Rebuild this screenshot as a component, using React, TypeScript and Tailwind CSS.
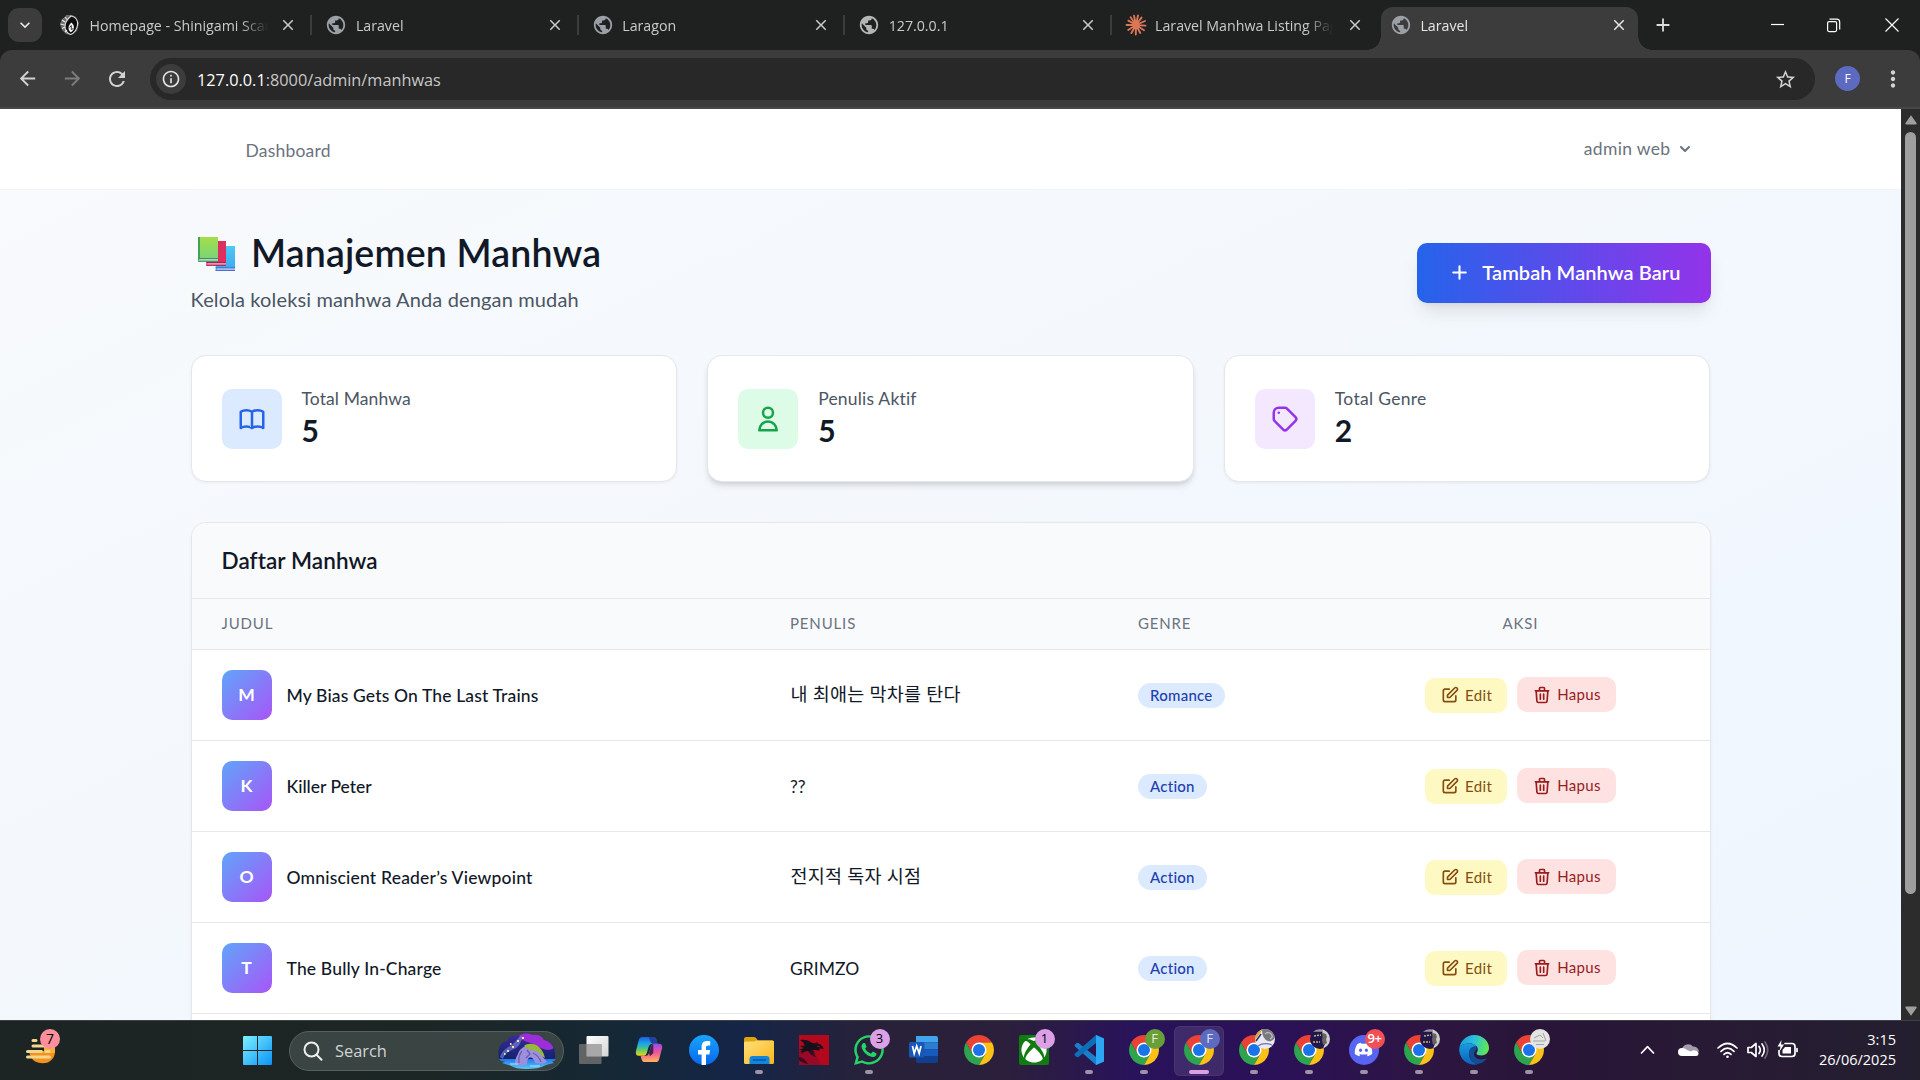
import type { ReactNode } from "react";
import { MdPublic, MdClose, MdAdd, MdArrowBack, MdArrowForward, MdRefresh, MdStarBorder, MdInfoOutline, MdMoreVert, MdKeyboardArrowDown } from "react-icons/md";
import { FaWhatsapp, FaXbox, FaDiscord } from "react-icons/fa";

/* ---------- browser chrome ---------- */

function Globe({ tone = "text-[#9aa0a6]" }: { tone?: string }) {
  return <MdPublic className={`size-[22px] shrink-0 ${tone}`} />;
}

function Burst() {
  return (
    <svg viewBox="0 0 22 22" className="size-[22px] shrink-0" stroke="#d97757" strokeWidth="1.9" strokeLinecap="round">
      <path d="M11 11 9 1.8M11 11 13 1.5M11 11 16.5 3.6M11 11 20 7M11 11 20.5 11.6M11 11 19 16.3M11 11 15.3 19M11 11 10.8 20.6M11 11 6.4 19M11 11 3.2 16M11 11 1.5 11M11 11 3.4 6.6M11 11 5.6 3.3" />
    </svg>
  );
}

function MaskIcon() {
  return (
    <svg viewBox="0 0 22 22" className="size-[22px] shrink-0">
      <path d="M1 10 3 5 6 3 7 1l6 0 4 2 3 6-2 8-6 4-5-1-4-4Z" fill="#6d6d6d" />
      <path d="M12 2c5 1 7 5 6.500 9S15 20 11.500 20.500C8 19 6 16 6 12.500S8.500 5 12 2Z" fill="#0c0c0c" stroke="#dcdcdc" strokeWidth="1.100" />
      <path d="M3 6l3 2M1.500 10l4 1M3 14.500l3-1.500M6 3l2 2.500M6 18l2-2" stroke="#e8e8e8" strokeWidth="1.200" />
      <path d="M12.300 8.500c2 1.500 2.900 3.600 2.600 5.500s-1.500 3.700-3 4.200c-1.600-1-2.500-2.600-2.400-4.500s1.300-3.700 2.800-5.200Z" fill="#f4f4f4" />
      <path d="m10.500 13.500 1.800-2v4l2-1" stroke="#222" strokeWidth=".9" fill="none" />
    </svg>
  );
}

type Tab = { title: string; icon: ReactNode };
const tabs: Tab[] = [
  { title: "Homepage - Shinigami Scans", icon: <MaskIcon /> },
  { title: "Laravel", icon: <Globe /> },
  { title: "Laragon", icon: <Globe /> },
  { title: "127.0.0.1", icon: <Globe tone="text-[#b5b5b5]" /> },
  { title: "Laravel Manhwa Listing Page", icon: <Burst /> },
];

function TabTitle({ children }: { children: ReactNode }) {
  return (
    <span className="ml-[8.5px] w-[180.5px] overflow-hidden pt-[1px] whitespace-nowrap text-[14.2px] [mask-image:linear-gradient(to_right,#000_150px,transparent_178px)]">
      {children}
    </span>
  );
}

function TabStrip() {
  return (
    <div className="flex h-[50px] shrink-0 items-center bg-[#1f2120] text-[#c9cbca]">
      <button className="ml-[8px] flex size-[34px] items-center justify-center rounded-[11px] bg-[#3c3c3c]">
        <MdKeyboardArrowDown className="size-[20px] text-[#e6e6e6]" />
      </button>
      <div className="ml-[4px] flex items-center">
        {tabs.map((t, i) => (
          <div key={t.title} className="flex w-[266.400px] items-center pl-[13px]">
            {t.icon}
            <TabTitle>{t.title}</TabTitle>
            <MdClose className="ml-[10px] size-[18px] shrink-0" />
            {i < tabs.length - 1 && <span className="ml-[13px] h-[20px] w-[2px] shrink-0 bg-[#3c3c3c]" />}
          </div>
        ))}
      </div>
      <div className="relative ml-[3px] mt-[7px] flex h-[43px] w-[257px] shrink-0 items-center rounded-t-[12px] bg-[#3c3c3c] pb-[7px] pl-[9px] text-[#e6e6e6]">
        <span className="absolute bottom-0 -left-[14px] size-[14px] bg-[radial-gradient(circle_at_0_0,transparent_13.5px,#3c3c3c_14px)]" />
        <span className="absolute bottom-0 -right-[14px] size-[14px] bg-[radial-gradient(circle_at_100%_0,transparent_13.5px,#3c3c3c_14px)]" />
        <Globe />
        <TabTitle>Laravel</TabTitle>
        <MdClose className="ml-[9px] size-[18px] shrink-0" />
      </div>
      <MdAdd className="ml-[14.5px] size-[22px] shrink-0 text-[#dcdcdc]" />
      <svg viewBox="0 0 130 16" className="mr-[20.5px] ml-auto h-[16px] w-[130px] shrink-0" fill="none" stroke="#fff" strokeWidth="1.2">
        <path d="M1 7.5h13" />
        <rect x="57.6" y="4.6" width="9" height="10" rx="1.5" />
        <path d="M59.5 2.2h7.2a3 3 0 0 1 3 3v7.3" />
        <path d="m115.500 1.500 13 13m0-13-13 13" />
      </svg>
    </div>
  );
}

function Toolbar() {
  return (
    <div className="shrink-0 bg-[#1f2120]">
      <div className="flex h-[59px] items-center rounded-t-[12px] border-b-2 border-[#484848] bg-[#3c3c3c] text-[#d2d2d2]">
        <MdArrowBack className="ml-[16px] size-[23px]" />
        <MdArrowForward className="ml-[22px] size-[23px] text-[#7c7c7c]" />
        <MdRefresh className="ml-[21px] size-[24px]" />
        <div className="mt-[1px] ml-[21px] flex h-[42px] w-[1665px] items-center rounded-full bg-[#282828]">
          <span className="ml-[6px] flex size-[30px] items-center justify-center rounded-full bg-[#3c3c3c]">
            <MdInfoOutline className="size-[20px] text-[#e3e3e3]" />
          </span>
          <span className="ml-[11px] pt-[2px] text-[16.3px] text-[#c7c7c7]">
            <span className="text-white">127.0.0.1</span>:8000/admin/manhwas
          </span>
          <MdStarBorder className="mr-[18px] ml-auto size-[23px]" />
        </div>
        <span className="ml-[20px] flex size-[25px] items-center justify-center rounded-full bg-[#5c6bc0] text-[12px] text-white">F</span>
        <MdMoreVert className="ml-[20px] size-[26px]" />
      </div>
    </div>
  );
}

/* ---------- page ---------- */

const paths = {
  book: "M12 6.253v13m0-13C10.832 5.477 9.246 5 7.5 5S4.168 5.477 3 6.253v13C4.168 18.477 5.754 18 7.5 18s3.332.477 4.5 1.253m0-13C13.168 5.477 14.754 5 16.5 5c1.747 0 3.332.477 4.5 1.253v13C19.832 18.477 18.247 18 16.5 18c-1.746 0-3.332.477-4.5 1.253",
  user: "M16 7a4 4 0 11-8 0 4 4 0 018 0zM12 14a7 7 0 00-7 7h14a7 7 0 00-7-7z",
  tag: "M7 7h.01M7 3h5c.512 0 1.024.195 1.414.586l7 7a2 2 0 010 2.828l-7 7a2 2 0 01-2.828 0l-7-7A1.994 1.994 0 013 12V7a4 4 0 014-4z",
  plus: "M12 6v6m0 0v6m0-6h6m-6 0H6",
  edit: "M11 5H6a2 2 0 00-2 2v11a2 2 0 002 2h11a2 2 0 002-2v-5m-1.414-9.414a2 2 0 112.828 2.828L11.828 15H9v-2.828l8.586-8.586z",
  trash: "M19 7l-.867 12.142A2 2 0 0116.138 21H7.862a2 2 0 01-1.995-1.858L5 7m5 4v6m4-6v6m1-10V4a1 1 0 00-1-1h-4a1 1 0 00-1 1v3M4 7h16",
};

function Outline({ name, className }: { name: keyof typeof paths; className: string }) {
  return (
    <svg viewBox="0 0 24 24" fill="none" stroke="currentColor" strokeWidth="2" strokeLinecap="round" strokeLinejoin="round" className={`shrink-0 ${className}`}>
      <path d={paths[name]} />
    </svg>
  );
}

function Books() {
  return (
    <svg viewBox="0 0 111 102" className="h-[34px] w-[37px]">
      <defs>
        <linearGradient id="bkGreen" x1="0" y1="0" x2="0" y2="1"><stop stopColor="#a5dd49" /><stop offset="1" stopColor="#72d47e" /></linearGradient>
        <linearGradient id="bkBlue" x1="0" y1="0" x2="0" y2="1"><stop stopColor="#4dc8f3" /><stop offset="1" stopColor="#3ba7f2" /></linearGradient>
      </defs>
      <path d="M53 27h58v75H53z" fill="url(#bkBlue)" />
      <path d="M56 94h55v5H56z" fill="#d3d3ee" /><path d="M53 98h58v4H53zM53 91h58v3H53z" fill="#4a6fd0" />
      <path d="M25 12h59v74H25z" fill="#de2d60" />
      <path d="M28 79h56v4H28z" fill="#dccfe4" /><path d="M25 83h59v3H25zM25 75h59v3H25z" fill="#a8234f" />
      <path d="M0 0h60v74H0z" fill="url(#bkGreen)" />
      <path d="M0 0h6v70H0z" fill="#43a155" />
      <path d="M3 67h57v4H3z" fill="#d8d3e2" /><path d="M0 71h60v3H0zM3 63h57v3H3z" fill="#3f8f5c" />
    </svg>
  );
}

const stats = [
  { label: "Total Manhwa", value: "5", icon: "book", tile: "bg-[#dbeafe] text-[#2563eb]", shadow: "shadow-[0_1px_3px_rgba(0,0,0,0.06)]", fit: "tracking-[0.1px]" },
  { label: "Penulis Aktif", value: "5", icon: "user", tile: "bg-[#dcfce7] text-[#16a34a]", shadow: "shadow-[0_5px_7px_-1px_rgba(0,0,0,0.1),0_3px_5px_-2px_rgba(0,0,0,0.1)]", fit: "tracking-[0.2px]" },
  { label: "Total Genre", value: "2", icon: "tag", tile: "bg-[#f3e8ff] text-[#9333ea]", shadow: "shadow-[0_1px_3px_rgba(0,0,0,0.06)]", fit: "tracking-[0.3px]" },
] as const;

const rows = [
  { title: "My Bias Gets On The Last Trains", author: "내 최애는 막차를 탄다", korean: true, genre: "Romance", fit: "tracking-[0.14px]" },
  { title: "Killer Peter", author: "??", korean: false, genre: "Action", fit: "tracking-[-0.02px]" },
  { title: "Omniscient Reader’s Viewpoint", author: "전지적 독자 시점", korean: true, genre: "Action", fit: "tracking-[0.2px]" },
  { title: "The Bully In-Charge", author: "GRIMZO", korean: false, genre: "Action", fit: "tracking-[0.16px]" },
];

const cols = "grid grid-cols-[568px_348px_224px_1fr]";

function Page() {
  return (
    <main className="min-w-0 flex-1 overflow-hidden bg-linear-to-br/srgb from-[#f8fafc] to-[#eff6ff] font-['Lato','Noto_Sans_CJK_KR',sans-serif] [--spacing:5px]">
      <nav className="h-[81px] border-b border-[#f1f3f5] bg-white">
        <div className="mx-auto flex h-16 w-[1520px] items-center justify-between pr-[16px] pl-[55px] text-[17.5px] text-[#6b7280]">
          <span className="pt-[5px] tracking-[0.2px]">Dashboard</span>
          <span className="flex items-center gap-[4px] tracking-[0.35px]">
            admin web
            <svg viewBox="0 0 20 20" className="size-[20px]" fill="currentColor">
              <path fillRule="evenodd" clipRule="evenodd" d="M5.293 7.293a1 1 0 011.414 0L10 10.586l3.293-3.293a1 1 0 111.414 1.414l-4 4a1 1 0 01-1.414 0l-4-4a1 1 0 010-1.414z" />
            </svg>
          </span>
        </div>
      </nav>

      <div className="mx-auto flex w-[1520px] flex-col gap-8 py-8 text-[#111827]">
        <header className="flex items-center justify-between">
          <div>
            <h1 className="mb-2 flex h-9 items-center text-[37.5px] font-semibold tracking-[0.15px]">
              <span className="mr-[16.5px] ml-[7px] flex pt-[2px]"><Books /></span>
              <span className="pt-[2px]">Manajemen Manhwa</span>
            </h1>
            <p className="-mt-px mb-px text-[20px] leading-[30px] tracking-[0.14px] text-[#4b5563]">Kelola koleksi manhwa Anda dengan mudah</p>
          </div>
          <button className="flex h-12 items-center gap-2 rounded-[10px] bg-linear-to-r/srgb from-[#2563eb] to-[#9333ea] px-6 pb-px text-[20px] font-semibold tracking-[0.06px] whitespace-nowrap text-white shadow-[0_12px_19px_-4px_rgba(0,0,0,0.1),0_5px_7px_-5px_rgba(0,0,0,0.1)]">
            <Outline name="plus" className="size-5" />
            Tambah Manhwa Baru
          </button>
        </header>

        <section className="grid grid-cols-3 gap-6">
          {stats.map((s) => (
            <div key={s.label} className={`flex h-[127px] items-center gap-4 rounded-[15px] border border-[#e5e7eb] bg-white px-6 ${s.shadow}`}>
              <span className={`flex size-12 items-center justify-center rounded-[10px] ${s.tile}`}>
                <Outline name={s.icon} className="size-6" />
              </span>
              <div>
                <p className={`text-[17.5px] leading-[25px] text-[#4b5563] ${s.fit}`}>{s.label}</p>
                <p className="-mt-px mb-px text-[30px] leading-[40px] font-bold">{s.value}</p>
              </div>
            </div>
          ))}
        </section>

        <section className="overflow-hidden rounded-[15px] border border-[#e5e7eb] bg-white shadow-[0_1px_3px_rgba(0,0,0,0.06)]">
          <h2 className="border-b border-[#e5e7eb] bg-[#f9fafb] px-6 py-4 text-[22.5px] leading-[35px] font-semibold tracking-[0.08px]">Daftar Manhwa</h2>
          <div className={`${cols} border-b border-[#e5e7eb] bg-[#f9fafb] pt-[14px] pb-[16px] text-[15px] leading-[20px] tracking-[0.85px] text-[#6b7280]`}>
            <span className="px-6">JUDUL</span>
            <span className="px-[30.5px]">PENULIS</span>
            <span className="px-[30.5px]">GENRE</span>
            <span className="text-center">AKSI</span>
          </div>
          {rows.map((r) => (
            <div key={r.title} className={`${cols} h-[91px] items-center border-b border-[#e5e7eb]`}>
              <div className="flex items-center gap-[15px] px-6">
                <span className="flex size-10 items-center justify-center rounded-[10px] bg-linear-to-br/srgb from-[#60a5fa] to-[#a855f7] text-[17.5px] font-bold text-white">{r.title[0]}</span>
                <span className={`pt-[2px] text-[17.5px] font-medium ${r.fit}`}>{r.title}</span>
              </div>
              <span className={r.korean ? "px-[31px] text-[18.5px] tracking-[0.25px]" : "px-[30.5px] pt-[2px] text-[17.5px]"}>{r.author}</span>
              <span className="px-6">
                <span className="inline-flex h-[25px] items-center rounded-full bg-[#dbeafe] px-[12.5px] pb-px align-middle text-[15px] font-medium tracking-[0.25px] text-[#1e40af]">{r.genre}</span>
              </span>
              <div className="flex items-start justify-center gap-2 text-[15px] tracking-[0.35px]">
                <button className="mt-px flex h-7 items-center gap-1 rounded-[10px] bg-[#fef9c3] px-3 pb-px text-[#854d0e]">
                  <Outline name="edit" className="size-4" />
                  Edit
                </button>
                <button className="flex h-7 items-center gap-1 rounded-[10px] bg-[#fee2e2] px-3 text-[#991b1b]">
                  <Outline name="trash" className="size-4" />
                  Hapus
                </button>
              </div>
            </div>
          ))}
          <div className="h-[91px]" />
        </section>
      </div>
    </main>
  );
}

function Scrollbar() {
  return (
    <div className="flex w-[19px] shrink-0 flex-col items-center bg-[#2c2c2c]">
      <svg viewBox="0 0 12 10" className="mt-[6px] h-[10px] w-[12px]" fill="#9f9f9f"><path d="M6 0.300 11.500 8q.6 1.600-.8 1.600H1.300Q-.1 9.600.5 8Z" /></svg>
      <span className="mt-[7px] h-[762px] w-[11px] rounded-full bg-[#9f9f9f]" />
      <svg viewBox="0 0 12 10" className="mt-auto mb-[4px] h-[10px] w-[12px]" fill="#9f9f9f"><path d="M6 9.700 11.500 2q.6-1.600-.8-1.600H1.300Q-.1.400.5 2Z" /></svg>
    </div>
  );
}

/* ---------- taskbar ---------- */

function Chrome() {
  return (
    <svg viewBox="0 0 48 48" className="size-[30px]">
      <path d="M24 12H44.780A24 24 0 0 0 3.220 12L13.600 30 24 24Z" fill="#ea4335" />
      <path d="M3.220 12A24 24 0 0 0 24 48L34.390 30 24 24 13.610 30Z" fill="#2da44e" />
      <path d="M24 48A24 24 0 0 0 44.780 12H24V24L34.390 30Z" fill="#fbc116" />
      <circle cx="24" cy="24" r="12" fill="#fff" />
      <circle cx="24" cy="24" r="9.600" fill="#1a73e8" />
    </svg>
  );
}

function Windows() {
  return (
    <svg viewBox="0 0 29 29" className="size-[29px]">
      <defs><linearGradient id="win" x1="0" y1="0" x2="1" y2="1"><stop stopColor="#7df0ff" /><stop offset="1" stopColor="#0a93f5" /></linearGradient></defs>
      <path d="M1 0h13v14H0V1q0-1 1-1Zm14 0h13q1 0 1 1v13H15ZM0 15h14v14H1q-1 0-1-1Zm15 0h14v13q0 1-1 1H15Z" fill="url(#win)" />
    </svg>
  );
}

function TaskView() {
  return (
    <svg viewBox="0 0 30 30" className="size-[30px]">
      <defs><linearGradient id="tv" x1="0" y1="0" x2="1" y2="1"><stop stopColor="#fff" /><stop offset="1" stopColor="#d4d4d4" /></linearGradient></defs>
      <rect x="7.500" y="1" width="22" height="20.500" rx="1" fill="url(#tv)" />
      <rect x="0" y="9" width="22.500" height="20" rx="1" fill="#6a6a6a" opacity=".9" />
      <path d="M7.500 9h15v12.500h-15z" fill="#a8a8a8" />
    </svg>
  );
}

function Copilot() {
  return (
    <svg viewBox="0 0 30 28" className="h-[27px] w-[30px]">
      <defs>
        <linearGradient id="cpA" x1="0" y1="0" x2="0" y2="1"><stop stopColor="#1b5fe0" /><stop offset=".35" stopColor="#1ba4e8" /><stop offset=".65" stopColor="#4fc97a" /><stop offset="1" stopColor="#f5d30c" /></linearGradient>
        <linearGradient id="cpB" x1="0" y1="0" x2="0" y2="1"><stop stopColor="#9a4be8" /><stop offset=".5" stopColor="#f0579a" /><stop offset="1" stopColor="#ffb657" /></linearGradient>
      </defs>
      <path d="M8 1h11q3 0 3.700 3l1 4h-5q-3 0-4 3l-2 6.500q-1 3-4 3H4.500q-4 0-3-5L4.500 4Q5.300 1 8 1Z" fill="url(#cpA)" />
      <path d="M14 1h5q3 0 3.700 3l1 4h-5q-2.500-1-3-4t-1.700-3Z" fill="#243f9e" />
      <path d="M22 27H11q-3 0-3.700-3l-1-3.500H11q3 0 4-3L17 11q1-3 4-3h4.500q4 0 3 5l-3 11Q24.700 27 22 27Z" fill="url(#cpB)" />
      <path d="M15 17.500 17 11l2.500-2.500v9L16 21Z" fill="#33213f" opacity=".9" />
    </svg>
  );
}

function Facebook() {
  return (
    <svg viewBox="0 0 30 30" className="size-[30px]">
      <defs><linearGradient id="fb" x1="0" y1="0" x2="0" y2="1"><stop stopColor="#19a5fb" /><stop offset="1" stopColor="#0866ee" /></linearGradient></defs>
      <circle cx="15" cy="15" r="15" fill="url(#fb)" />
      <path d="M12.600 29.900V19.500H9V15h3.600v-2.900c0-4 2-6 5.400-6 1.500 0 2.700.2 3.200.3v4h-2c-1.700 0-2.200.9-2.200 2.200V15h4.100l-.7 4.500H17v10.400Z" fill="#fff" />
    </svg>
  );
}

function Explorer() {
  return (
    <svg viewBox="0 0 30 30" className="size-[30px]">
      <defs><linearGradient id="fx" x1="0" y1="0" x2="1" y2="1"><stop stopColor="#ffe07a" /><stop offset="1" stopColor="#fbb51b" /></linearGradient></defs>
      <path d="M0 4q0-2 2-2h8q1 0 2 1l2 2.500h14q2 0 2 2V12H0Z" fill="#dea20b" />
      <path d="M0 8q0-1.500 1.500-1.500H10Q12 5.500 13.500 5.500H28.500Q30 5.500 30 7V27.500q0 1.500-1.500 1.500h-27Q0 29 0 27.500Z" fill="url(#fx)" />
      <path d="M5.500 29v-5q0-3 3-3h14q3 0 3 3v5Z" fill="#1385dc" />
      <path d="M9 25h13" stroke="#07417e" />
    </svg>
  );
}

function Dragon() {
  return (
    <svg viewBox="0 0 30 30" className="size-[30px]">
      <path d="M0 0h30v30H0z" fill="#b4091c" />
      <path d="M0 16 14 14 22 30H0Z" fill="#9a0828" />
      <path d="M1 5q7-1 12 3l6 0.500q4 1 6 5.500l-5-.5 1 2-6-.5q-3 1.500-7 1-4 .500-5 3l-.5-2.500L0 18l3-2.500-3-1 5-1.200L1 11l5-.6Q5 7 1 5Z" fill="#15111b" />
      <path d="M14 8.500 19 7l-1 3ZM9 16q3 5 8 6-2-3-2-6ZM0 22q6 1 9 7-6-1-9-4Z" fill="#3a0a1e" />
      <path d="M18 11.500h3" stroke="#b4091c" strokeWidth=".8" />
    </svg>
  );
}

function Word() {
  return (
    <svg viewBox="0 0 30 30" className="size-[30px]">
      <path d="M7 1h20q2 0 2 2v4.500H7Z" fill="#41a5ee" /><path d="M7 7.500h22v7H7Z" fill="#2b7cd3" />
      <path d="M7 14.500h22v7H7Z" fill="#185abd" /><path d="M7 21.500h22V26q0 2-2 2H9q-2 0-2-2Z" fill="#103f91" />
      <rect x="0" y="7" width="15.500" height="15.500" rx="1.500" fill="#1857b8" />
      <path d="m3.500 11 1.700 7.500L7.700 11l2.500 7.500L12 11" fill="none" stroke="#fff" strokeWidth="1.700" />
    </svg>
  );
}

function Xbox() {
  return (
    <span className="flex size-[30px] items-center justify-center rounded-[2px] bg-[#107c10]">
      <FaXbox className="size-[26px] text-white" />
    </span>
  );
}

function Code() {
  return (
    <svg viewBox="0 0 30 30" className="size-[30px]">
      <path d="M22 0 30 3.500v23L22 30 1 11.500q-1-1 0-2l1.500-1.400q1-.8 2 0L22 22Z" fill="#1b7fc9" />
      <path d="M22 0 .9 18.500q-1 1 0 2l1.600 1.400q1 .8 2 0L22 8Z" fill="#0e6eb8" />
      <path d="M22 0 30 3.500v23L22 30Z" fill="#2aa6f2" />
    </svg>
  );
}

function Discord() {
  return (
    <span className="flex size-[30px] items-center justify-center rounded-full bg-[#5865f2]">
      <FaDiscord className="size-[19px] text-white" />
    </span>
  );
}

function Edge() {
  return (
    <svg viewBox="0 0 30 30" className="size-[30px]">
      <defs>
        <linearGradient id="eg1" x1="0" y1=".3" x2="1" y2=".5"><stop stopColor="#1b9de2" /><stop offset=".5" stopColor="#2cc3d5" /><stop offset="1" stopColor="#62e84e" /></linearGradient>
        <linearGradient id="eg2" x1="0" y1="0" x2="0" y2="1"><stop stopColor="#199be2" /><stop offset="1" stopColor="#0b62b8" /></linearGradient>
      </defs>
      <path d="M.5 12C2 5 8 0 15 0c9 0 15 6.500 15 13 0 4.500-3.500 7.500-7.500 7.500-3 0-5-1-5-2s1.300-1.700 1.300-4.200C18.800 11 15 8.500 11 8.500 6 8.500 2 10 .5 12Z" fill="url(#eg1)" />
      <path d="M.5 12C2 10 6 8.500 11 8.500c3 0 5.500 1.200 6.800 3.200-4-1-7.800 2-7.800 7C10 24 14 28.500 19 29.200A15 15 0 0 1 .5 12Z" fill="url(#eg2)" />
      <path d="M17.500 11.700C13 11 10 14.500 10 18.700c0 6 5 10.600 9.300 10.300 4-1 7-3.300 8.700-6-8 4-15-1-12.500-6 .8-1.500 2-2.400 2.300-3Z" fill="#124d96" />
    </svg>
  );
}

function Badge({ children, className }: { children?: ReactNode; className: string }) {
  return <span className={`absolute -top-[6px] left-[16px] flex size-[20px] items-center justify-center overflow-hidden rounded-full text-[13px] leading-none ${className}`}>{children}</span>;
}

function JerseyAvatar() {
  return (
    <svg viewBox="0 0 20 20" className="size-[20px]">
      <path d="M0 0h20v20H0z" fill="#21164d" />
      <path d="M12 0h8v20h-7l1-3 2-4-3-5Z" fill="#cfcfca" />
      <path d="M13 4l3 1 1 3-1 2 1 4-4 2-1-5Z" fill="#6a6260" />
      <path d="M0 1.500h12" stroke="#9a97a6" strokeWidth="2.500" />
      <path d="M4 7 11 6M3 13h7" stroke="#c9b46a" strokeWidth="1.500" strokeDasharray="2 1" />
    </svg>
  );
}

function RingAvatar() {
  return (
    <svg viewBox="0 0 20 20" className="size-[20px]">
      <path d="M0 0h20v20H0z" fill="#e9eaf0" />
      <path d="M0 11 8 0H0Z" fill="#e0a52a" />
      <path d="M7 0h13v8q-2 5-7 4-6-2-6-12Z" fill="#77797d" />
      <path d="M10 5q3-3 6 0t-1 5" stroke="#b4b6b8" strokeWidth="1.500" fill="none" />
      <path d="M1 12 6 5" stroke="#26306e" strokeWidth="1.500" />
      <path d="M3 17q6-4 14-1" stroke="#6a72c0" strokeWidth="1.300" fill="none" />
    </svg>
  );
}

function PaleAvatar() {
  return (
    <svg viewBox="0 0 20 20" className="size-[20px]">
      <path d="M0 0h20v20H0z" fill="#e4e4e4" />
      <path d="M3 12h12M4 9l6-3 3 3M13 4l3 8M6 15.500h8" stroke="#a2a2a2" fill="none" />
    </svg>
  );
}

type App = { name: string; icon: ReactNode; badge?: ReactNode; state?: "open" | "active" };
const apps: App[] = [
  { name: "task view", icon: <TaskView /> },
  { name: "copilot", icon: <Copilot /> },
  { name: "facebook", icon: <Facebook /> },
  { name: "explorer", icon: <Explorer />, state: "open" },
  { name: "dragon", icon: <Dragon /> },
  { name: "whatsapp", icon: <FaWhatsapp className="size-[34px] shrink-0 text-[#25d366]" />, badge: <Badge className="bg-[#dca0e6] text-black">3</Badge>, state: "open" },
  { name: "word", icon: <Word /> },
  { name: "chrome", icon: <Chrome /> },
  { name: "xbox", icon: <Xbox />, badge: <Badge className="bg-[#dca0e6] text-black">1</Badge> },
  { name: "code", icon: <Code />, state: "open" },
  { name: "chrome f green", icon: <Chrome />, badge: <Badge className="bg-[#689f38] text-[#e6efdc]">F</Badge>, state: "open" },
  { name: "chrome f blue", icon: <Chrome />, badge: <Badge className="bg-[#5c6bc0] text-[#dfe2f4]">F</Badge>, state: "active" },
  { name: "chrome ring", icon: <Chrome />, badge: <Badge className=""><RingAvatar /></Badge>, state: "open" },
  { name: "chrome jersey", icon: <Chrome />, badge: <Badge className=""><JerseyAvatar /></Badge>, state: "open" },
  { name: "discord", icon: <Discord />, badge: <Badge className="bg-[#f04f55] font-semibold tracking-[-0.500px] text-white">9+</Badge>, state: "open" },
  { name: "chrome jersey 2", icon: <Chrome />, badge: <Badge className=""><JerseyAvatar /></Badge>, state: "open" },
  { name: "edge", icon: <Edge />, state: "open" },
  { name: "chrome pale", icon: <Chrome />, badge: <Badge className=""><PaleAvatar /></Badge>, state: "open" },
];

function SearchArt() {
  return (
    <svg viewBox="0 0 58 36" className="h-[36px] w-[58px]">
      <defs>
        <linearGradient id="saSky" x1="0" y1="0" x2="0" y2="1"><stop stopColor="#3d2a9c" /><stop offset="1" stopColor="#12246e" /></linearGradient>
        <linearGradient id="saSea" x1="0" y1="0" x2="0" y2="1"><stop stopColor="#2376e8" /><stop offset="1" stopColor="#5ccaf8" /></linearGradient>
      </defs>
      <path d="M1 26C-1 16 2 9 9 8c1-4 6-6 10-5C23 0 30-1 35 2c5-1 9 1 11 5 8 1 12 8 11 19Z" fill="url(#saSky)" />
      <path d="M21 2.500C26-.5 31 0 35 2c5-1 9 1 11 5 5 1 8 4 9.500 8-6 5-14-1-19-3.500S24 9 21 2.500Z" fill="#9a2fd8" />
      <path d="M2 24C5 15 12 14 16 10s4-6 7-7l3 2c-4 2-3 7-8 10S7 19 5 26Z" fill="#7d8cd8" opacity=".6" />
      <path d="M1 26h57q-1 2-4 2.500l2 1.500q-6 1-9 2.500-6 3.500-19 3.500-10 0-16-3.500Q8 31 4 30l3-1.500Q2 28 1 26Z" fill="url(#saSea)" />
      <path d="M17 31c0-4 1-7 3-10 1-4 4-7 9-8l10 2c3 2 5 6 6 9l4 5q-4 2-8 1.500l-4-1c-1-3-2-5-5-5-2 0-3 3-3 7l-5 1Q20 33 17 31Z" fill="#9c90dc" />
      <path d="M26 13c3-3 11-3 15 1s5 7 6 11c-4-2-5-6-9-7s-8-1-12-5Z" fill="#98b83a" />
      <path d="M24 18q-4 5-3 12M35 20q6 3 8 9M29 17l3 4-4 4" stroke="#6a5cb8" strokeWidth="1.300" fill="none" />
      <path d="M19 8h2M14 14h2M24 5h2M9 18h2M12 11h1.500M6 21h1.500" stroke="#ffd9b0" strokeWidth="1.800" />
      <path d="M12 31h8M32 33h10" stroke="#a7e4ff" strokeWidth="1" />
    </svg>
  );
}

function Taskbar() {
  return (
    <footer className="flex h-[60px] shrink-0 items-center border-t border-[#3c4143] bg-[linear-gradient(to_right,#1d2524_0,#1c2625_440px,#152836_620px,#152547_740px,#292139_880px,#2b1f3c_1010px,#29135a_1130px,#2b1157_1280px,#2c163f_1450px,#281537_1560px,#281a34_1720px,#231f2f_1920px)] text-white">
      <span className="relative ml-[26px] block h-[29px] w-[32px]">
        <svg viewBox="0 0 32 29" className="h-[29px] w-[32px]">
          <path d="M3 15h26q0 8-7 11.500-7 2-13-1Q4 22 3 15Z" fill="#f3921e" />
          <path d="M18 5h11v12H18Z" fill="#f8b131" />
          <path d="M7 4.500h3M7 10h13M1.500 15.500h14M20 15.500h3M1.500 21h22" stroke="#f4d68d" strokeWidth="3" strokeLinecap="round" />
        </svg>
        <span className="absolute -top-[7px] left-[14px] flex size-[20px] items-center justify-center rounded-full bg-[#ff8f9b] text-[14px] leading-none text-black">7</span>
      </span>
      <span className="ml-[172px] flex w-[55px] justify-center"><Windows /></span>
      <div className="ml-[4px] flex h-[40px] w-[275px] items-center rounded-full border border-[#566060] bg-[#3a4443] pr-[7px] pl-[13px]">
        <svg viewBox="0 0 20 20" className="size-[20px]" fill="none" stroke="#eee" strokeWidth="2" strokeLinecap="round"><circle cx="8.500" cy="8.500" r="7" /><path d="m13.500 13.700 5 5" /></svg>
        <span className="ml-[12px] pt-[1px] text-[16.4px] text-[#d0d4d4]">Search</span>
        <span className="ml-auto"><SearchArt /></span>
      </div>
      <div className="ml-[2px] flex">
        {apps.map((a) => (
          <span key={a.name} className="flex w-[55px] justify-center">
            <span className={a.state === "active" ? "flex h-[50px] w-[50px] flex-col items-center rounded-[6px] bg-white/10 pt-[9px] ring-1 ring-white/5 ring-inset" : "flex h-[50px] w-[50px] flex-col items-center pt-[9px]"}>
              <span className="relative flex h-[30px] w-[30px] items-center justify-center">
                {a.icon}
                {a.badge}
              </span>
              {a.state === "open" && <span className="mt-[5px] h-[4px] w-[8px] rounded-full bg-[#9c93a8]" />}
              {a.state === "active" && <span className="mt-[5px] h-[4px] w-[20px] rounded-full bg-[#dca0e6]" />}
            </span>
          </span>
        ))}
      </div>
      <svg viewBox="0 0 160 24" className="mb-[2px] ml-auto h-[24px] w-[160px] shrink-0" fill="none" stroke="#fff" strokeWidth="1.700" strokeLinecap="round" strokeLinejoin="round">
        <path d="m2.500 15 6-6.300 6 6.300" />
        <g stroke="none"><path d="M43 11a6.500 6.500 0 0 1 11-2.500q5 0 6 5l-10 1Z" fill="#a39cac" /><path d="M43 18a4 4 0 0 1 0-8q3 0 5 2l4 1.500q3-2 5-.5a2.500 2.500 0 0 1 0 5Z" fill="#fff" /></g>
        <path d="M79 10q9.500-9 19 0M82 13.300q6.500-6.300 13 0M85 16.400q3.500-3.300 7 0" />
        <circle cx="88.500" cy="18.700" r="1.300" fill="#fff" stroke="none" />
        <path d="M109 9.500h3.300l4.700-4v13l-4.700-4H109ZM120 8.500q2.600 3.500 0 7M123 6q4.600 6 0 12" />
        <path d="M126 4q5.500 8 0 16" stroke="#6d6378" />
        <path d="M146 5.500h7q3 0 3 3v7q0 3-3 3h-10q-3 0-3-3v-3M158 10.500v3" />
        <path d="M146 9h6v6.500h-8.500V12Z" fill="#fff" stroke="none" />
        <path d="m142.500 2-4 6.500h3l-1 5 4.500-7h-3Z" fill="#fff" stroke="none" />
      </svg>
      <div className="mr-[24px] mb-[2px] ml-[19px] w-[78px] text-right text-[14.5px] leading-[20px] whitespace-nowrap">
        <div>3:15</div>
        <div>26/06/2025</div>
      </div>
    </footer>
  );
}

export default function App() {
  return (
    <div className="flex h-[1080px] w-[1920px] flex-col overflow-hidden font-['Open_Sans','Noto_Sans',sans-serif]">
      <TabStrip />
      <Toolbar />
      <div className="flex h-[911px] shrink-0">
        <Page />
        <Scrollbar />
      </div>
      <Taskbar />
    </div>
  );
}
